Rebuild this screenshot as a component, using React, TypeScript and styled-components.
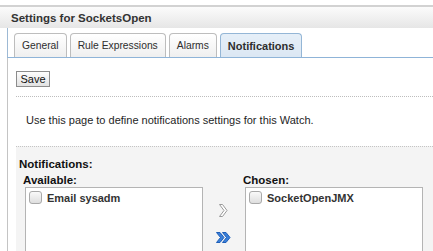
import * as React from 'react';
import styled, { createGlobalStyle } from 'styled-components';

const GlobalStyle = createGlobalStyle`
	body {
		margin: 0;
		background: #ffffff;
		font-family: "Liberation Sans", Arial, sans-serif;
		color: #222222;
	}
`;

const Page = styled.div`
	padding-top: 5px;
	width: 433px;
	height: 246px;
	overflow: hidden;
`;

const Header = styled.div`
	height: 21px;
	border-top: 2px solid #d2d2d2;
	background: linear-gradient(#fbfbfb, #e6e6e6);
	padding-left: 11px;
	display: flex;
	align-items: center;
	font-size: 11.5px;
	font-weight: bold;
	color: #333333;
`;

const Frame = styled.div`
	margin-left: 7px;
	display: flex;
	flex-direction: column;
`;

const TabBar = styled.div`
	display: flex;
	gap: 3px;
	padding: 5px 0 0 6px;
	border-left: 1px solid #9db9d4;
	border-bottom: 1px solid #8fb4d8;
`;

const Tab = styled.div<{ selected?: boolean }>`
	height: 23px;
	padding: 0 7px;
	display: flex;
	align-items: center;
	border: 1px solid ${({ selected }) => (selected ? '#94b6d6' : '#bdbdbd')};
	border-bottom: none;
	border-radius: 4px 4px 0 0;
	background: ${({ selected }) => (
		selected ? 'linear-gradient(#e6eff8, #dbe7f3)' : 'linear-gradient(#ffffff, #efefef)'
	)};
	font-size: ${({ selected }) => (selected ? '11px' : '10.3px')};
	font-weight: ${({ selected }) => (selected ? 'bold' : 'normal')};
	color: #2e2e2e;
`;

const Content = styled.div`
	border-left: 1px solid #c4c4c4;
	padding: 13px 0 0 8px;
	height: 190px;
`;

const SaveButton = styled.button`
	height: 16px;
	width: 34px;
	padding: 0;
	font-family: "Liberation Sans", Arial, sans-serif;
	font-size: 11px;
	color: #111111;
	border: 1px solid #8c8c8c;
	border-radius: 0;
	background: linear-gradient(#fdfdfd, #e2e2e2);
	display: block;
`;

const Divider = styled.div`
	margin-top: 9px;
	border-top: 1px dotted #bdbdbd;
`;

const Intro = styled.p`
	margin: 16px 0 0 10px;
	font-size: 11px;
	line-height: 14px;
	color: #1e1e1e;
`;

const ShuttleSection = styled.div`
	margin-top: 19px;
	border-top: 1px dotted #c4c4c4;
	background: #f4f4f4;
	padding: 10px 0 0 3px;
	height: 100px;
`;

const Heading = styled.div`
	font-size: 11.5px;
	font-weight: bold;
	line-height: 14px;
	color: #111111;
`;

const Columns = styled.div`
	display: flex;
	margin-top: 2px;
	padding-left: 4px;
`;

const ListColumn = styled.div`
	display: flex;
	flex-direction: column;
`;

const Label = styled.div`
	font-size: 11.5px;
	font-weight: bold;
	line-height: 14px;
	color: #111111;
`;

const ListBox = styled.div`
	box-sizing: border-box;
	margin-left: 2px;
	width: 178px;
	height: 70px;
	border: 1px solid #b4b4b4;
	background: #ffffff;
	padding: 3px;
`;

const Item = styled.label`
	display: flex;
	align-items: center;
	gap: 5px;
	font-size: 11px;
	font-weight: bold;
	color: #333333;
	height: 13px;
`;

const Check = styled.span`
	width: 11px;
	height: 11px;
	border: 1px solid #a9a9a9;
	border-radius: 3px;
	background: linear-gradient(#fafafa, #dedede);
`;

const Buttons = styled.div`
	width: 40px;
	display: flex;
	flex-direction: column;
	align-items: center;
	gap: 14px;
	padding-top: 30px;
`;

const MoveOne = () => (
	<svg width="10" height="15" viewBox="0 0 10 15">
		<path d="M1.5 1.5 H4.5 L9 7.5 L4.5 13.5 H1.5 L6 7.5 Z" fill="#ffffff" stroke="#9a9a9a" strokeWidth="1" strokeLinejoin="round" />
	</svg>
);

const MoveAll = () => (
	<svg width="15" height="11" viewBox="0 0 15 11">
		<path d="M0.5 0.5 H4 L8 5.5 L4 10.5 H0.5 L4.5 5.5 Z" fill="#3a7fd9" stroke="#1f5fb8" strokeWidth="1" strokeLinejoin="round" />
		<path d="M6.5 0.5 H10 L14 5.5 L10 10.5 H6.5 L10.5 5.5 Z" fill="#3a7fd9" stroke="#1f5fb8" strokeWidth="1" strokeLinejoin="round" />
	</svg>
);

const tabs = ['General', 'Rule Expressions', 'Alarms', 'Notifications'];

export default function App() {
	return (
		<Page>
			<GlobalStyle />
			<Header>Settings for SocketsOpen</Header>
			<Frame>
				<TabBar>
					{tabs.map((t) => (
						<Tab key={t} selected={t === 'Notifications'}>{t}</Tab>
					))}
				</TabBar>
				<Content>
					<SaveButton>Save</SaveButton>
					<Divider />
					<Intro>Use this page to define notifications settings for this Watch.</Intro>
					<ShuttleSection>
						<Heading>Notifications:</Heading>
						<Columns>
							<ListColumn>
								<Label>Available:</Label>
								<ListBox>
									<Item><Check />Email sysadm</Item>
								</ListBox>
							</ListColumn>
							<Buttons>
								<MoveOne />
								<MoveAll />
							</Buttons>
							<ListColumn>
								<Label>Chosen:</Label>
								<ListBox>
									<Item><Check />SocketOpenJMX</Item>
								</ListBox>
							</ListColumn>
						</Columns>
					</ShuttleSection>
				</Content>
			</Frame>
		</Page>
	);
}
